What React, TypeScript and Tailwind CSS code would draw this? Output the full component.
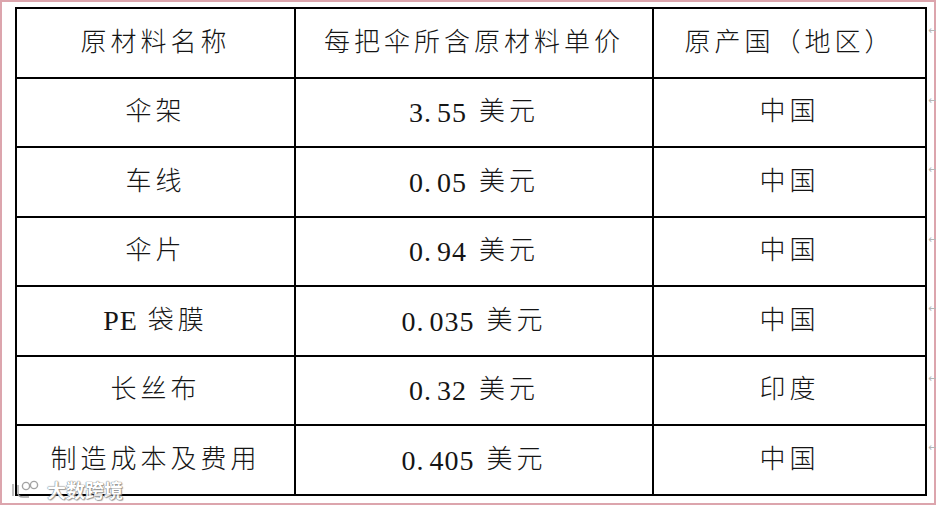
import React from "react";

const rows: [string, string, string][] = [
  ["伞架", "3.55", "中国"],
  ["车线", "0.05", "中国"],
  ["伞片", "0.94", "中国"],
  ["PE 袋膜", "0.035", "中国"],
  ["长丝布", "0.32", "印度"],
  ["制造成本及费用", "0.405", "中国"],
];

const cjk = "font-['Liberation_Serif','Noto_Sans_CJK_SC',serif]";

function Cell({ children }: { children: React.ReactNode }) {
  return (
    <div className="border-r-2 border-b-2 border-black flex items-center justify-center text-[26px] leading-none text-[#151515] font-light tracking-[4px]">
      {children}
    </div>
  );
}

function Num({ v }: { v: string }) {
  const [i, f] = v.split(".");
  return (
    <span className="text-[28px] tracking-[1px] mr-[12px] translate-y-[1px]">
      {i}.<span className="ml-[5px]">{f}</span>
    </span>
  );
}

export default function App() {
  return (
    <div
      className={`w-[936px] h-[505px] bg-white border-2 border-[#dca5ad] box-border pl-[13px] pt-[5px] flex ${cjk}`}
    >
      <div className="relative w-[912px] h-[489px] border-t-2 border-l-2 border-black grid grid-cols-[279px_358px_273px] auto-rows-[69.5px]">
        <Cell>原材料名称</Cell>
        <Cell>每把伞所含原材料单价</Cell>
        <Cell>原产国（地区）</Cell>
        {rows.map(([a, b, c]) => (
          <React.Fragment key={a}>
            <Cell>
              {a.startsWith("PE") ? (
                <>
                  <span className="text-[28px] tracking-[1px] mr-[10px]">PE</span>
                  <span>袋膜</span>
                </>
              ) : (
                a
              )}
            </Cell>
            <Cell>
              <Num v={b} />
              <span>美元</span>
            </Cell>
            <Cell>{c}</Cell>
          </React.Fragment>
        ))}
        <div className="absolute left-[-8px] bottom-[-8px] flex items-center gap-[4px] opacity-90">
          <svg width="34" height="22" viewBox="0 0 34 22">
            <g fill="none" stroke="#9a9a9a" strokeWidth="1.4">
              <path d="M4 5 v12" />
              <path d="M9 6 v8 q0 4 5 4 h6" />
              <circle cx="17" cy="7" r="3.6" fill="#fff" />
              <circle cx="25" cy="6" r="3.6" fill="#fff" />
            </g>
          </svg>
          <span className="font-['Noto_Sans_CJK_SC',sans-serif] font-bold text-[19px] text-white tracking-[0px] [text-shadow:0_0_1px_#666,0_0_1px_#666,1px_1px_1px_#999]">
            大数跨境
          </span>
        </div>
      </div>
      <div className="w-[8px] flex flex-col pt-[2px]">
        {Array.from({ length: 7 }).map((_, i) => (
          <div
            key={i}
            className="h-[69.5px] flex items-center justify-start text-[11px] text-[#b5b5b5] font-['DejaVu_Sans',sans-serif] leading-none pl-[1px] pb-[26px]"
          >
            ←
          </div>
        ))}
      </div>
    </div>
  );
}
